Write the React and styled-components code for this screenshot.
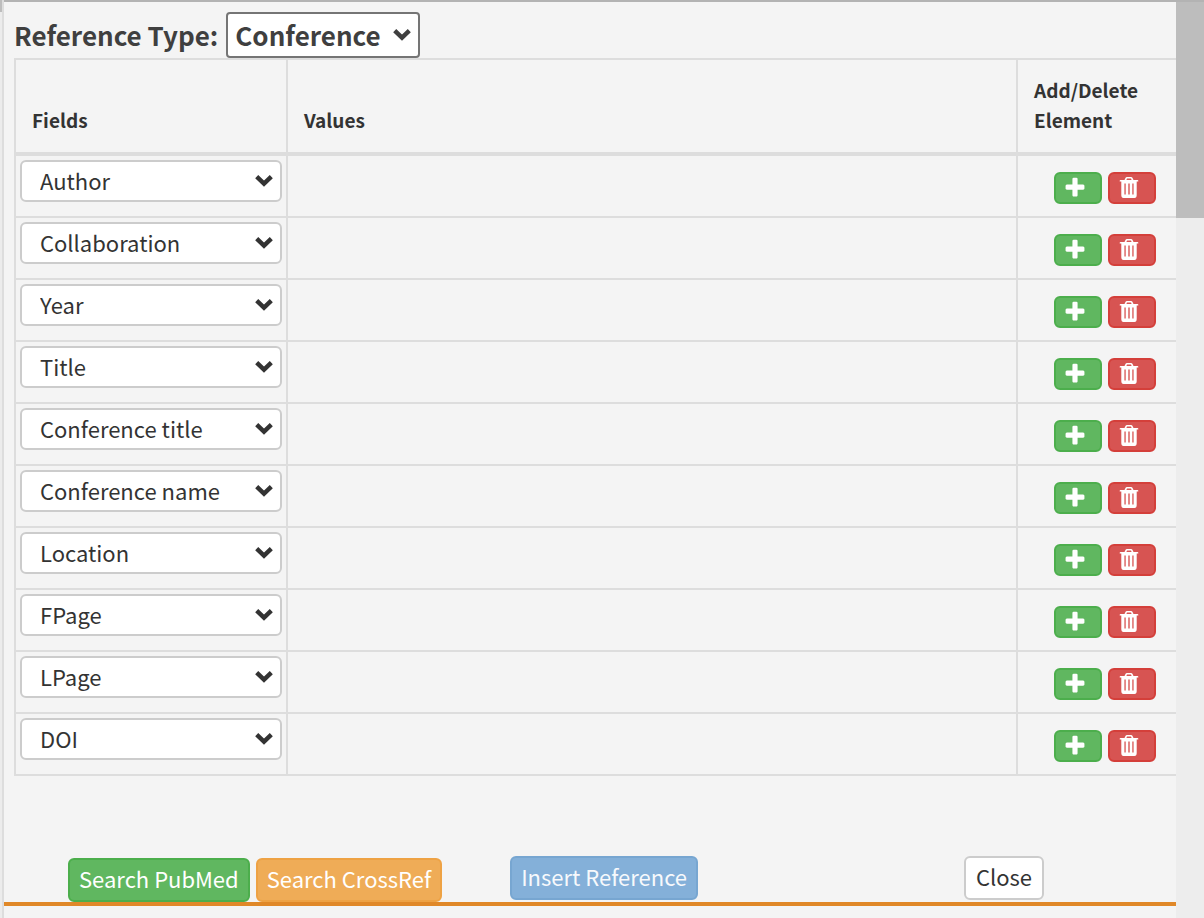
import React from "react";
import styled, { createGlobalStyle, css } from "styled-components";

const Global = createGlobalStyle`
  *, *::before, *::after { box-sizing: border-box; }
  html, body, #root { height: 100%; }
  body {
    margin: 0;
    background: #f4f4f4;
    color: #333;
    font-family: "Noto Sans CJK SC", "Noto Sans", sans-serif;
    font-size: 22px;
    line-height: 30px;
    overflow: hidden;
  }
  button, select { font: inherit; color: inherit; }
`;

const Screen = styled.div`
  display: flex;
  min-height: 100%;
`;

const Gutter = styled.div`
  flex: none;
  width: 4px;
  background: #ececec;
  border-right: 2px solid #ddd;

  &::before {
    content: "";
    display: block;
    height: 12px;
    background: #bdbdbd;
  }
`;

const Panel = styled.main`
  flex: 1;
  min-width: 0;
  display: flex;
  flex-direction: column;
  border-top: 2px solid #b3b3b3;
`;

const TypeRow = styled.div`
  display: flex;
  align-items: center;
  gap: 8px;
  padding: 10px 10px 0;
  color: #3f3f3f;
  font-size: 26px;
  font-weight: 700;
`;

const SelectWrap = styled.span`
  display: ${(p) => (p.$fill ? "flex" : "inline-flex")};
  align-items: center;
  position: relative;
`;

const Select = styled.select`
  appearance: none;
  margin: 0;
  background: #fff;
  outline: none;
  ${(p) =>
    p.$heading
      ? css`
          height: 46px;
          width: 194px;
          padding: 0 36px 0 7px;
          border: 2px solid #757575;
          border-radius: 4px;
        `
      : css`
          height: 42px;
          width: 100%;
          padding: 0 36px 2px 18px;
          border: 2px solid #ccc;
          border-radius: 6px;
          font-size: 22px;
        `}
`;

const Arrow = styled.svg`
  position: absolute;
  right: 9px;
  width: 18px;
  height: 12px;
  pointer-events: none;
  fill: none;
  stroke: currentColor;
  stroke-width: 4.4;
`;

const Table = styled.table`
  width: calc(100% - 10px);
  margin-left: 10px;
  border-spacing: 0;
  border-top: 2px solid #ddd;
  table-layout: fixed;
`;

const Col = styled.col`
  width: ${(p) => p.$width || "auto"};
`;

const Th = styled.th`
  height: 96px;
  padding: 14px 16px 17px;
  border-left: 2px solid #ddd;
  border-bottom: 4px solid #ddd;
  text-align: left;
  vertical-align: bottom;
  font-size: 19px;
  font-weight: 700;
`;

const Td = styled.td`
  height: 62px;
  padding: 4px;
  border-left: 2px solid #ddd;
  border-bottom: 2px solid #ddd;
  vertical-align: top;
`;

const Actions = styled.div`
  display: flex;
  gap: 6px;
  padding: 12px 16px 0 32px;
`;

const tones = {
  green: ["#60b760", "#4cae4c", "#fff"],
  red: ["#d75452", "#d43f3a", "#fff"],
  orange: ["#efac57", "#eea244", "#fff"],
  blue: ["#84b0d9", "#77a6d1", "#f7f9fc"],
  plain: ["#fff", "#ccc", "#333"],
};

const Button = styled.button`
  display: flex;
  align-items: center;
  justify-content: center;
  min-width: 80px;
  height: 44px;
  padding: 0 9px 4px;
  border: 2px solid ${(p) => tones[p.$tone][1]};
  border-radius: 6px;
  background: ${(p) => tones[p.$tone][0]};
  color: ${(p) => tones[p.$tone][2]};
  white-space: nowrap;
  cursor: pointer;
`;

const IconButton = styled(Button)`
  min-width: 48px;
  height: 32px;
  padding: 2px 0 0 7px;
  align-items: flex-start;
  justify-content: flex-start;
`;

const Glyph = styled.svg`
  flex: none;
  width: 24px;
  height: 24px;
  fill: currentColor;
`;

const Footer = styled.footer`
  display: flex;
  align-items: flex-start;
  margin-top: 80px;
  padding: 0 132px 0 64px;
  border-bottom: 4px solid #e08828;
`;

const SearchGroup = styled.div`
  display: flex;
  gap: 6px;
  padding-top: 2px;
  margin-right: 68px;
`;

const CloseSlot = styled.div`
  margin-left: auto;
`;

const Scrollbar = styled.div`
  flex: none;
  width: 28px;
  background: #ededed;
  border-top: 2px solid #b3b3b3;

  &::before {
    content: "";
    display: block;
    height: 216px;
    background: #bdbdbd;
  }
`;

const fields = [
  "Author",
  "Collaboration",
  "Year",
  "Title",
  "Conference title",
  "Conference name",
  "Location",
  "FPage",
  "LPage",
  "DOI",
];

function Chevron() {
  return (
    <Arrow viewBox="0 0 18 12" aria-hidden="true">
      <path d="M1.700 1.700 L9 8.700 L16.300 1.700" />
    </Arrow>
  );
}

function PlusIcon() {
  return (
    <Glyph viewBox="0 0 1792 1792" aria-hidden="true">
      <path d="M1600 736v192q0 40-28 68t-68 28h-416v416q0 40-28 68t-68 28h-192q-40 0-68-28t-28-68v-416h-416q-40 0-68-28t-28-68v-192q0-40 28-68t68-28h416v-416q0-40 28-68t68-28h192q40 0 68 28t28 68v416h416q40 0 68 28t28 68z" />
    </Glyph>
  );
}

function TrashIcon() {
  return (
    <Glyph viewBox="1 0 24 24" aria-hidden="true">
      <path
        fillRule="evenodd"
        d="M8.500 4 L9.600 1.800 Q10 1 11 1 H15 Q16 1 16.400 1.800 L17.500 4 H21.500 Q22.300 4 22.300 4.800 V5.500 H20.700 V19 Q20.700 22 18.500 22 H7.500 Q5.300 22 5.300 19 V5.500 H3.700 V4.800 Q3.700 4 4.500 4 Z M10.400 4 H15.600 L15 2.600 H11 Z M8.400 7.500 V18.500 H9.700 V7.500 Z M12.300 7.500 V18.500 H13.700 V7.500 Z M16.300 7.500 V18.500 H17.600 V7.500 Z"
      />
    </Glyph>
  );
}

function FieldRow({ name }) {
  return (
    <tr>
      <Td>
        <SelectWrap $fill>
          <Select defaultValue={name} aria-label="Field">
            {fields.map((f) => (
              <option key={f}>{f}</option>
            ))}
          </Select>
          <Chevron />
        </SelectWrap>
      </Td>
      <Td />
      <Td>
        <Actions>
          <IconButton type="button" $tone="green" aria-label={`Add ${name}`}>
            <PlusIcon />
          </IconButton>
          <IconButton type="button" $tone="red" aria-label={`Delete ${name}`}>
            <TrashIcon />
          </IconButton>
        </Actions>
      </Td>
    </tr>
  );
}

export default function App() {
  return (
    <>
      <Global />
      <Screen>
        <Gutter />
        <Panel>
          <TypeRow>
            <label htmlFor="reference-type">Reference Type:</label>
            <SelectWrap>
              <Select $heading id="reference-type" defaultValue="Conference">
                <option>Conference</option>
              </Select>
              <Chevron />
            </SelectWrap>
          </TypeRow>
          <Table>
            <colgroup>
              <Col $width="272px" />
              <Col />
              <Col $width="160px" />
            </colgroup>
            <thead>
              <tr>
                <Th scope="col">Fields</Th>
                <Th scope="col">Values</Th>
                <Th scope="col">Add/Delete Element</Th>
              </tr>
            </thead>
            <tbody>
              {fields.map((f) => (
                <FieldRow key={f} name={f} />
              ))}
            </tbody>
          </Table>
          <Footer>
            <SearchGroup>
              <Button type="button" $tone="green">Search PubMed</Button>
              <Button type="button" $tone="orange">Search CrossRef</Button>
            </SearchGroup>
            <Button type="button" $tone="blue">Insert Reference</Button>
            <CloseSlot>
              <Button type="button" $tone="plain">Close</Button>
            </CloseSlot>
          </Footer>
        </Panel>
        <Scrollbar />
      </Screen>
    </>
  );
}
